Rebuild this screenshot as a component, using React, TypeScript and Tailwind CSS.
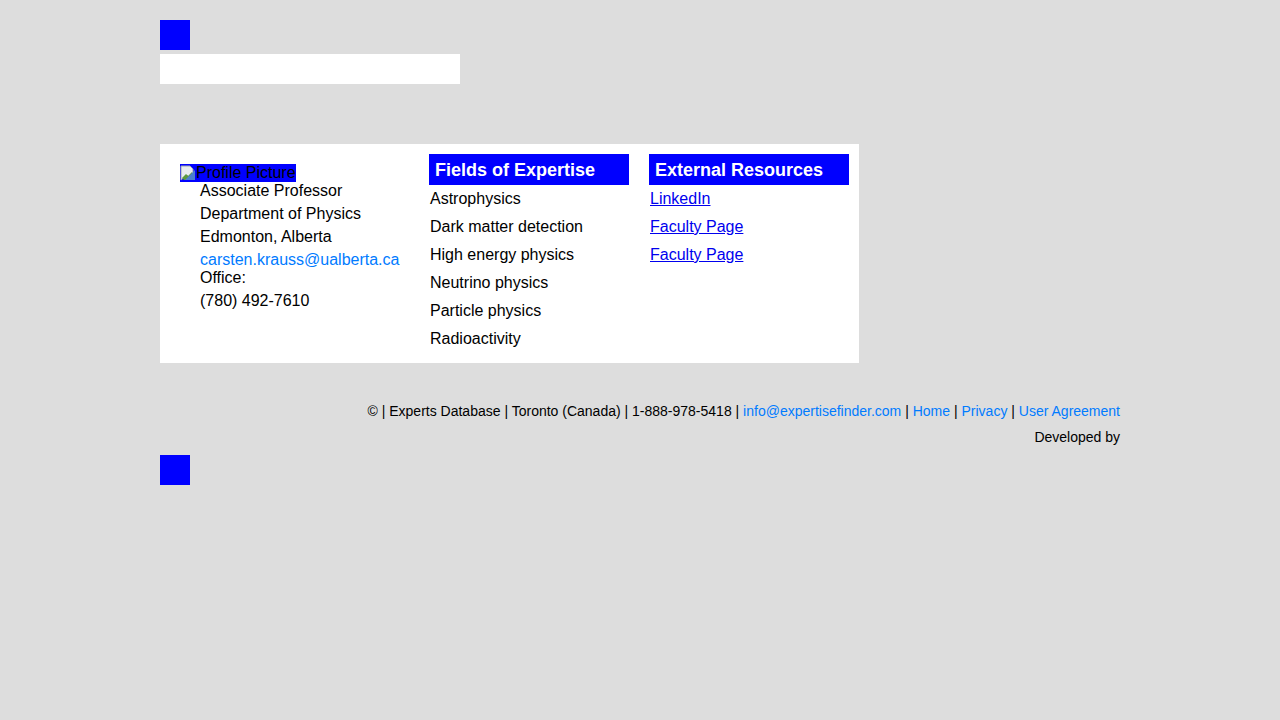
const fields = [
  "Astrophysics",
  "Dark matter detection",
  "High energy physics",
  "Neutrino physics",
  "Particle physics",
  "Radioactivity",
];

const resources = ["LinkedIn", "Faculty Page", "Faculty Page"];

const BrokenImage = () => (
  <svg width="16" height="16" viewBox="0 0 16 16" className="shrink-0">
    <path d="M1 1h9l3 3v4L9 12l-2-2-6 5z" fill="#e8ecef" stroke="#9aa4ad" strokeWidth="1" />
    <path d="M2 13l4-4 2 2 4-4v8H4z" fill="#5a9a3c" />
    <path d="M5 15l10-10v10z" fill="#4a7fd0" />
  </svg>
);

export default function App() {
  return (
    <div className="min-h-screen bg-[#dddddd] font-['Liberation_Sans',Arial,sans-serif] text-black">
      <div className="mx-auto w-[960px] pt-5">
        <div className="h-[30px] w-[30px] bg-[#0000ff]" />
        <div className="mt-1 h-[30px] w-[300px] bg-white" />

        <div className="mt-[60px] inline-flex bg-white py-[10px] pl-[10px]">
          <div className="w-[249px] p-[10px]">
            <div className="flex h-[18px] w-fit items-center bg-[#0000ff] text-[16px] leading-[18px]">
              <BrokenImage />
              <span>Profile Picture</span>
            </div>
            <div className="pl-5 text-[16px] leading-[18px]">
              <p className="mb-[5px]">Associate Professor</p>
              <p className="mb-[5px]">Department of Physics</p>
              <p className="mb-[5px]">Edmonton, Alberta</p>
              <a href="#" className="block text-[#007bff]">
                carsten.krauss@ualberta.ca
              </a>
              <p className="mb-[5px]">Office:</p>
              <p>(780) 492-7610</p>
            </div>
          </div>

          <div className="w-[220px] px-[10px]">
            <h3 className="h-[31px] bg-[#0000ff] pl-[6px] pt-px text-[18px] font-bold leading-[30px] text-white">
              Fields of Expertise
            </h3>
            <ul>
              {fields.map((f) => (
                <li key={f} className="h-[28px] pl-px text-[16px] leading-[28px]">
                  {f}
                </li>
              ))}
            </ul>
          </div>

          <div className="w-[220px] px-[10px]">
            <h3 className="h-[31px] bg-[#0000ff] pl-[6px] pt-px text-[18px] font-bold leading-[30px] text-white">
              External Resources
            </h3>
            <ul>
              {resources.map((r, i) => (
                <li key={i} className="h-[28px] pl-px text-[16px] leading-[28px]">
                  <a href="#" className="text-[#0000ee] underline">
                    {r}
                  </a>
                </li>
              ))}
            </ul>
          </div>
        </div>

        <div className="mt-[35px] text-right text-[14px] leading-[26px]">
          <p>
            © | Experts Database | Toronto (Canada) | 1-888-978-5418 |{" "}
            <a href="#" className="text-[#007bff]">info@expertisefinder.com</a> |{" "}
            <a href="#" className="text-[#007bff]">Home</a> |{" "}
            <a href="#" className="text-[#007bff]">Privacy</a> |{" "}
            <a href="#" className="text-[#007bff]">User Agreement</a>
          </p>
          <p>Developed by</p>
        </div>
        <div className="mt-[5px] h-[30px] w-[30px] bg-[#0000ff]" />
      </div>
    </div>
  );
}
